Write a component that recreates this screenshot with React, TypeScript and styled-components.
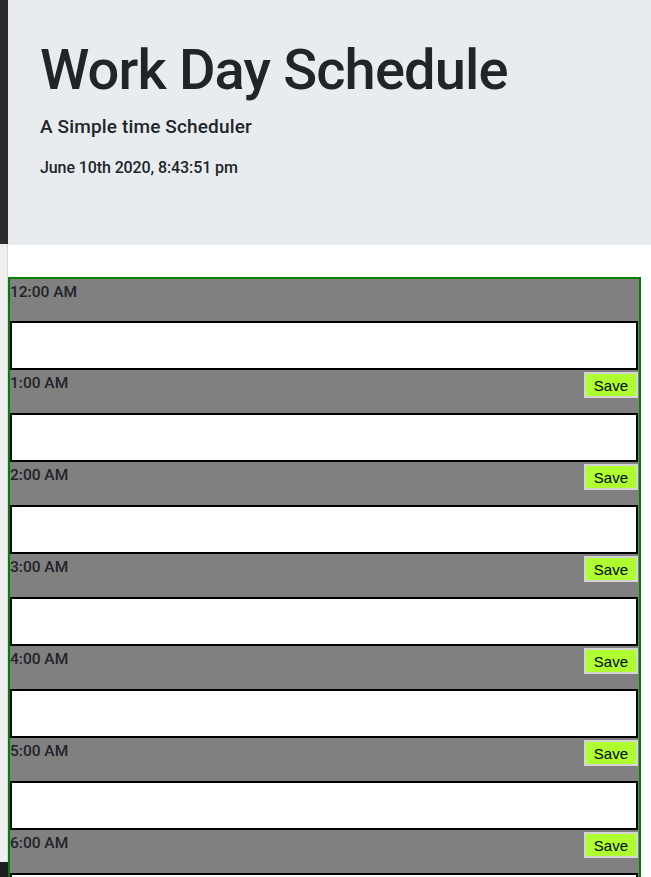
import React from "react";
import styled, { createGlobalStyle } from "styled-components";

const GlobalStyle = createGlobalStyle`
  html { background: #ffffff; }
  body {
    margin: 0;
    padding: 0 0 0 8px;
    min-height: 877px;
    font-family: Roboto, "Liberation Sans", Arial, sans-serif;
    color: #212529;
    background-color: #ffffff;
    background-image:
      linear-gradient(#2b2b2b, #2b2b2b),
      linear-gradient(to right, #efefef 7px, #d6d6d6 7px),
      linear-gradient(#1e1e1e, #1e1e1e);
    background-repeat: no-repeat;
    background-size: 8px 244px, 8px 618px, 8px 200px;
    background-position: 0 0, 0 244px, 0 862px;
    overflow: hidden;
  }
`;

const Jumbotron = styled.header`
  background: #e9ecef;
  height: 245px;
  box-sizing: border-box;
  padding: 37px 32px 0 32px;
`;

const Title = styled.h1`
  margin: 0;
  font-size: 56px;
  line-height: 67px;
  font-weight: 500;
  letter-spacing: -0.85px;
  color: #212529;
`;

const Lead = styled.p`
  margin: 9px 0 0 0;
  font-size: 19px;
  line-height: 28px;
  font-weight: 500;
  letter-spacing: 0.15px;
`;

const DateLine = styled.p`
  margin: 16px 0 0 0;
  font-size: 16px;
  line-height: 22px;
  font-weight: 500;
  letter-spacing: -0.1px;
`;

const Schedule = styled.section`
  margin-top: 32px;
  width: 633px;
  box-sizing: border-box;
  border: 2px solid #008000;
  border-bottom: none;
  background: #808080;
  padding-right: 1px;
`;

const HourBlock = styled.div`
  display: flex;
  flex-direction: column;
`;

const LabelRow = styled.div<{ $first?: boolean }>`
  display: flex;
  justify-content: space-between;
  align-items: flex-start;
  height: ${(p) => (p.$first ? 42 : 43)}px;
`;

const TimeLabel = styled.span`
  font-size: 15.5px;
  line-height: 27px;
  font-weight: 500;
  color: #212529;
`;

const SaveButton = styled.button`
  margin-top: 2px;
  height: 26px;
  padding: 0 8px;
  border: 2px solid #d4d4d4;
  background: #adff2f;
  font-family: "Liberation Sans", Arial, sans-serif;
  font-size: 15px;
  color: #000;
  cursor: pointer;
`;

const Note = styled.textarea`
  display: block;
  box-sizing: border-box;
  width: 100%;
  height: 49px;
  margin: 0;
  border: 2px solid #000;
  background: #fff;
  resize: none;
  font-family: "Liberation Sans", Arial, sans-serif;
  font-size: 14px;
`;

const hours = ["12:00 AM", "1:00 AM", "2:00 AM", "3:00 AM", "4:00 AM", "5:00 AM", "6:00 AM"];

export default function App() {
  return (
    <>
      <GlobalStyle />
      <Jumbotron>
        <Title>Work Day Schedule</Title>
        <Lead>A Simple time Scheduler</Lead>
        <DateLine>June 10th 2020, 8:43:51 pm</DateLine>
      </Jumbotron>
      <Schedule>
        {hours.map((h, i) => (
          <HourBlock key={h}>
            <LabelRow $first={i === 0}>
              <TimeLabel>{h}</TimeLabel>
              {i > 0 && <SaveButton>Save</SaveButton>}
            </LabelRow>
            <Note />
          </HourBlock>
        ))}
      </Schedule>
    </>
  );
}
